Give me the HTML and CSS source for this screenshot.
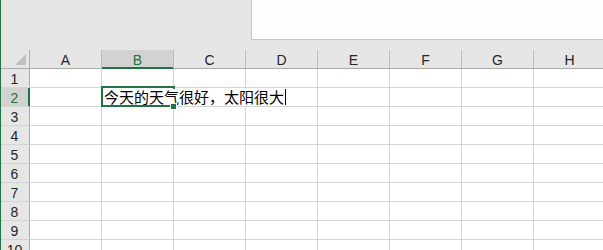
FILE: index.html
```html
<!DOCTYPE html>
<html lang="zh-CN">
<head>
    <meta charset="UTF-8">
    <title>Sheet1</title>
    <link rel="stylesheet" href="styles.css">
</head>
<body>
    <div class="app">
        <div class="topbar">
            <div class="ribbon-space"></div>
            <div class="formula-box"></div>
        </div>
        <div class="grid">
            <div class="corner"><span class="corner-tri"></span></div>
            <div class="col-head">A</div>
            <div class="col-head active">B</div>
            <div class="col-head">C</div>
            <div class="col-head">D</div>
            <div class="col-head">E</div>
            <div class="col-head">F</div>
            <div class="col-head">G</div>
            <div class="col-head">H</div>

            <div class="row-head">1</div>
            <div class="cell"></div><div class="cell"></div><div class="cell"></div><div class="cell"></div>
            <div class="cell"></div><div class="cell"></div><div class="cell"></div><div class="cell"></div>

            <div class="row-head active">2</div>
            <div class="cell"></div>
            <div class="cell spill"><span class="cell-text">今天的天气很好，太阳很大</span><span class="caret"></span></div>
            <div class="cell"></div><div class="cell"></div><div class="cell"></div><div class="cell"></div>

            <div class="row-head">3</div>
            <div class="cell"></div><div class="cell"></div><div class="cell"></div><div class="cell"></div>
            <div class="cell"></div><div class="cell"></div><div class="cell"></div><div class="cell"></div>

            <div class="row-head">4</div>
            <div class="cell"></div><div class="cell"></div><div class="cell"></div><div class="cell"></div>
            <div class="cell"></div><div class="cell"></div><div class="cell"></div><div class="cell"></div>

            <div class="row-head">5</div>
            <div class="cell"></div><div class="cell"></div><div class="cell"></div><div class="cell"></div>
            <div class="cell"></div><div class="cell"></div><div class="cell"></div><div class="cell"></div>

            <div class="row-head">6</div>
            <div class="cell"></div><div class="cell"></div><div class="cell"></div><div class="cell"></div>
            <div class="cell"></div><div class="cell"></div><div class="cell"></div><div class="cell"></div>

            <div class="row-head">7</div>
            <div class="cell"></div><div class="cell"></div><div class="cell"></div><div class="cell"></div>
            <div class="cell"></div><div class="cell"></div><div class="cell"></div><div class="cell"></div>

            <div class="row-head">8</div>
            <div class="cell"></div><div class="cell"></div><div class="cell"></div><div class="cell"></div>
            <div class="cell"></div><div class="cell"></div><div class="cell"></div><div class="cell"></div>

            <div class="row-head">9</div>
            <div class="cell"></div><div class="cell"></div><div class="cell"></div><div class="cell"></div>
            <div class="cell"></div><div class="cell"></div><div class="cell"></div><div class="cell"></div>

            <div class="row-head">10</div>
            <div class="cell"></div><div class="cell"></div><div class="cell"></div><div class="cell"></div>
            <div class="cell"></div><div class="cell"></div><div class="cell"></div><div class="cell"></div>

            <!-- selection box over B2 -->
            <div class="selection"></div>
            <div class="fill-handle"></div>
        </div>
    </div>
</body>
</html>
```

FILE: styles.css
```css
body { margin: 0; background: #ffffff; font-family: "Liberation Sans", Arial, sans-serif; }
.app { width: 602px; height: 250px; overflow: hidden; background: #e6e6e6; border-left: 1px solid #217346; }

.topbar { display: flex; align-items: flex-start; height: 50px; }
.ribbon-space { width: 250px; }
.formula-box { flex: 1; height: 40px; background: #fdfdfd; border-left: 1px solid #c6c6c6; border-bottom: 1px solid #c6c6c6; box-sizing: border-box; }

.grid { position: relative; display: grid; grid-template-columns: 29px repeat(8, 72px); grid-auto-rows: 19px; }
.grid > div { box-sizing: border-box; }

.corner { display: flex; justify-content: flex-end; align-items: flex-end; padding: 0 3px 3px 0; border-right: 1px solid #ababab; border-bottom: 1px solid #ababab; }
.corner-tri { width: 11px; height: 11px; background: #c0c0c0; clip-path: polygon(100% 0, 100% 100%, 0 100%); }

.col-head { display: flex; justify-content: center; align-items: center; font-size: 14px; color: #262626; border-right: 1px solid #bdbdbd; border-bottom: 1px solid #ababab; padding-top: 1px; }
.col-head.active { background: #d2d2d2; color: #217346; border-bottom-color: #217346; box-shadow: inset 0 -1px 0 #217346; }

.row-head { display: flex; justify-content: center; align-items: center; font-size: 14px; color: #262626; border-right: 1px solid #ababab; border-bottom: 1px solid #d4d4d4; padding-top: 2px; padding-right: 1px; }
.row-head.active { background: #d2d2d2; color: #217346; border-right-color: #217346; box-shadow: inset -1px 0 0 #217346; }

.cell { background: #ffffff; border-right: 1px solid #d4d4d4; border-bottom: 1px solid #d4d4d4; }
.cell.spill { grid-column: span 3; display: flex; align-items: flex-start; padding: 1px 0 0 2px; white-space: nowrap; }
.cell-text { position: relative; z-index: 2; background: #ffffff; font-family: "Noto Sans CJK SC", "Liberation Sans", sans-serif; font-size: 15px; line-height: 16px; color: #000000; }
.caret { position: relative; z-index: 2; display: inline-block; width: 1px; height: 16px; background: #000000; margin-left: 1px; }

.selection { position: absolute; left: 100px; top: 36px; width: 74px; height: 21px; border: 2px solid #217346; box-sizing: border-box; }
.fill-handle { position: absolute; z-index: 3; left: 169px; top: 53px; width: 7px; height: 7px; background: #217346; border: 1px solid #ffffff; box-sizing: border-box; }
```
